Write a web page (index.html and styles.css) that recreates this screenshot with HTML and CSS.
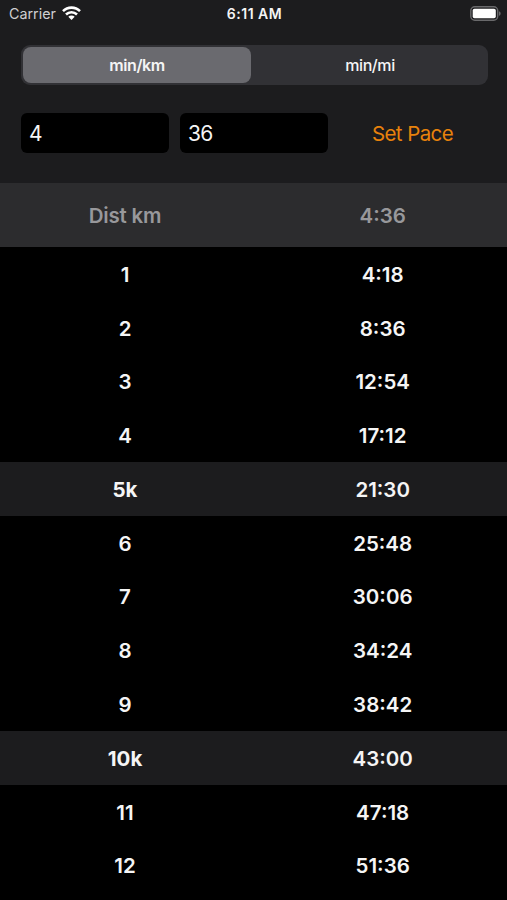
FILE: index.html
```html
<!DOCTYPE html>
<html lang="en">
<head>
  <meta charset="UTF-8" />
  <meta name="viewport" content="width=device-width, initial-scale=1.0"/>
  <title>Pace Chart</title>
  <link rel="stylesheet" href="styles.css">
</head>
<body>
  <header class="top">
    <div class="status-bar">
      <div class="carrier">
        <span>Carrier</span>
        <svg class="wifi" viewBox="0 0 19 14" width="19" height="14">
          <g fill="none" stroke="#fff" stroke-width="2.6">
            <path d="M1 5.1a12.1 12.1 0 0 1 17 0"/>
            <path d="M4 8.5a7.9 7.9 0 0 1 11 0"/>
          </g>
          <path d="M6.3 10.8a4.6 4.6 0 0 1 6.4 0L9.5 14z" fill="#fff"/>
        </svg>
      </div>
      <div class="time">6:11 AM</div>
      <svg class="battery" viewBox="0 0 31 15" width="31" height="15">
        <rect x="0.8" y="0.8" width="26.9" height="13.4" rx="4" fill="none" stroke="#69696b" stroke-width="1.4"/>
        <rect x="2.7" y="2.7" width="23.1" height="9.6" rx="1.8" fill="#fff"/>
        <path d="M29 5.2c2.2.8 2.2 3.8 0 4.6z" fill="#69696b"/>
      </svg>
    </div>

    <div class="segments">
      <button class="segment active" type="button">min/km</button>
      <button class="segment" type="button">min/mi</button>
    </div>

    <form class="pace-form" id="pace-form">
      <input type="text" id="pace-min" value="4" aria-label="Minutes" />
      <input type="text" id="pace-sec" value="36" aria-label="Seconds" />
      <button class="set-pace" type="button">Set Pace</button>
    </form>
  </header>

  <main class="chart">
    <div class="row heading"><span>Dist km</span><span>4:36</span></div>
    <div class="row"><span>1</span><span>4:18</span></div>
    <div class="row"><span>2</span><span>8:36</span></div>
    <div class="row"><span>3</span><span>12:54</span></div>
    <div class="row"><span>4</span><span>17:12</span></div>
    <div class="row race"><span>5k</span><span>21:30</span></div>
    <div class="row"><span>6</span><span>25:48</span></div>
    <div class="row"><span>7</span><span>30:06</span></div>
    <div class="row"><span>8</span><span>34:24</span></div>
    <div class="row"><span>9</span><span>38:42</span></div>
    <div class="row race"><span>10k</span><span>43:00</span></div>
    <div class="row"><span>11</span><span>47:18</span></div>
    <div class="row"><span>12</span><span>51:36</span></div>
  </main>
</body>
</html>
```
FILE: styles.css
```css
* {
  box-sizing: border-box;
  font-family: Inter, 'Liberation Sans', sans-serif;
}

body {
  margin: 0;
  height: 100vh;
  overflow: hidden;
  background: #000;
  color: #f5f5f5;
}

button,
input {
  margin: 0;
  border: none;
  color: inherit;
}

button {
  padding: 0;
  background: none;
  cursor: pointer;
}

.top {
  height: 183px;
  background: #1c1c1e;
}

/* Status bar */
.status-bar {
  display: grid;
  grid-template-columns: 1fr auto 1fr;
  align-items: center;
  height: 27px;
  padding: 0 6px 0 8px;
}

.carrier {
  display: flex;
  align-items: center;
  gap: 6px;
  padding-left: 1px;
  font-size: 14.3px;
  color: #cfcfd1;
}

.wifi {
  display: block;
  margin-top: -2px;
}

.time {
  font-size: 14px;
  font-weight: 600;
  letter-spacing: 0.5px;
}

.battery {
  justify-self: end;
}

/* Unit switch */
.segments {
  display: flex;
  width: 467px;
  height: 40px;
  margin: 18px 0 0 21px;
  padding: 2px;
  border-radius: 9px;
  background: #313135;
}

.segment {
  flex: 1;
  padding-left: 3px;
  border-radius: 8px;
  font-size: 16px;
  font-weight: 500;
  letter-spacing: -0.4px;
}

.segment.active {
  flex: 0 0 228px;
  padding-left: 0;
  background: #6a6a6f;
  font-weight: 600;
}

/* Pace inputs */
.pace-form {
  display: flex;
  gap: 11px;
  margin-top: 28px;
  padding: 0 21px;
}

.pace-form input {
  width: 148px;
  height: 40px;
  padding: 0 8px;
  border-radius: 6px;
  background: #000;
  font-size: 21px;
  letter-spacing: -0.8px;
}

.set-pace {
  flex: 1;
  font-size: 20.5px;
  letter-spacing: -0.6px;
  color: #e8820c;
}

/* Distance table */
.row {
  display: grid;
  grid-template-columns: 1fr 1fr;
  column-gap: 9px;
  align-items: center;
  height: 53.77px;
  padding: 1px 0 0 0.7px;
  font-size: 20.5px;
  font-weight: 600;
  text-align: center;
}

.heading {
  height: 64px;
  padding-top: 0;
  background: #2c2c2e;
  color: #98989b;
}

.heading span:first-child {
  letter-spacing: -0.2px;
}

.race {
  background: #1c1c1e;
}

.race span:first-child {
  font-weight: 700;
}
```
